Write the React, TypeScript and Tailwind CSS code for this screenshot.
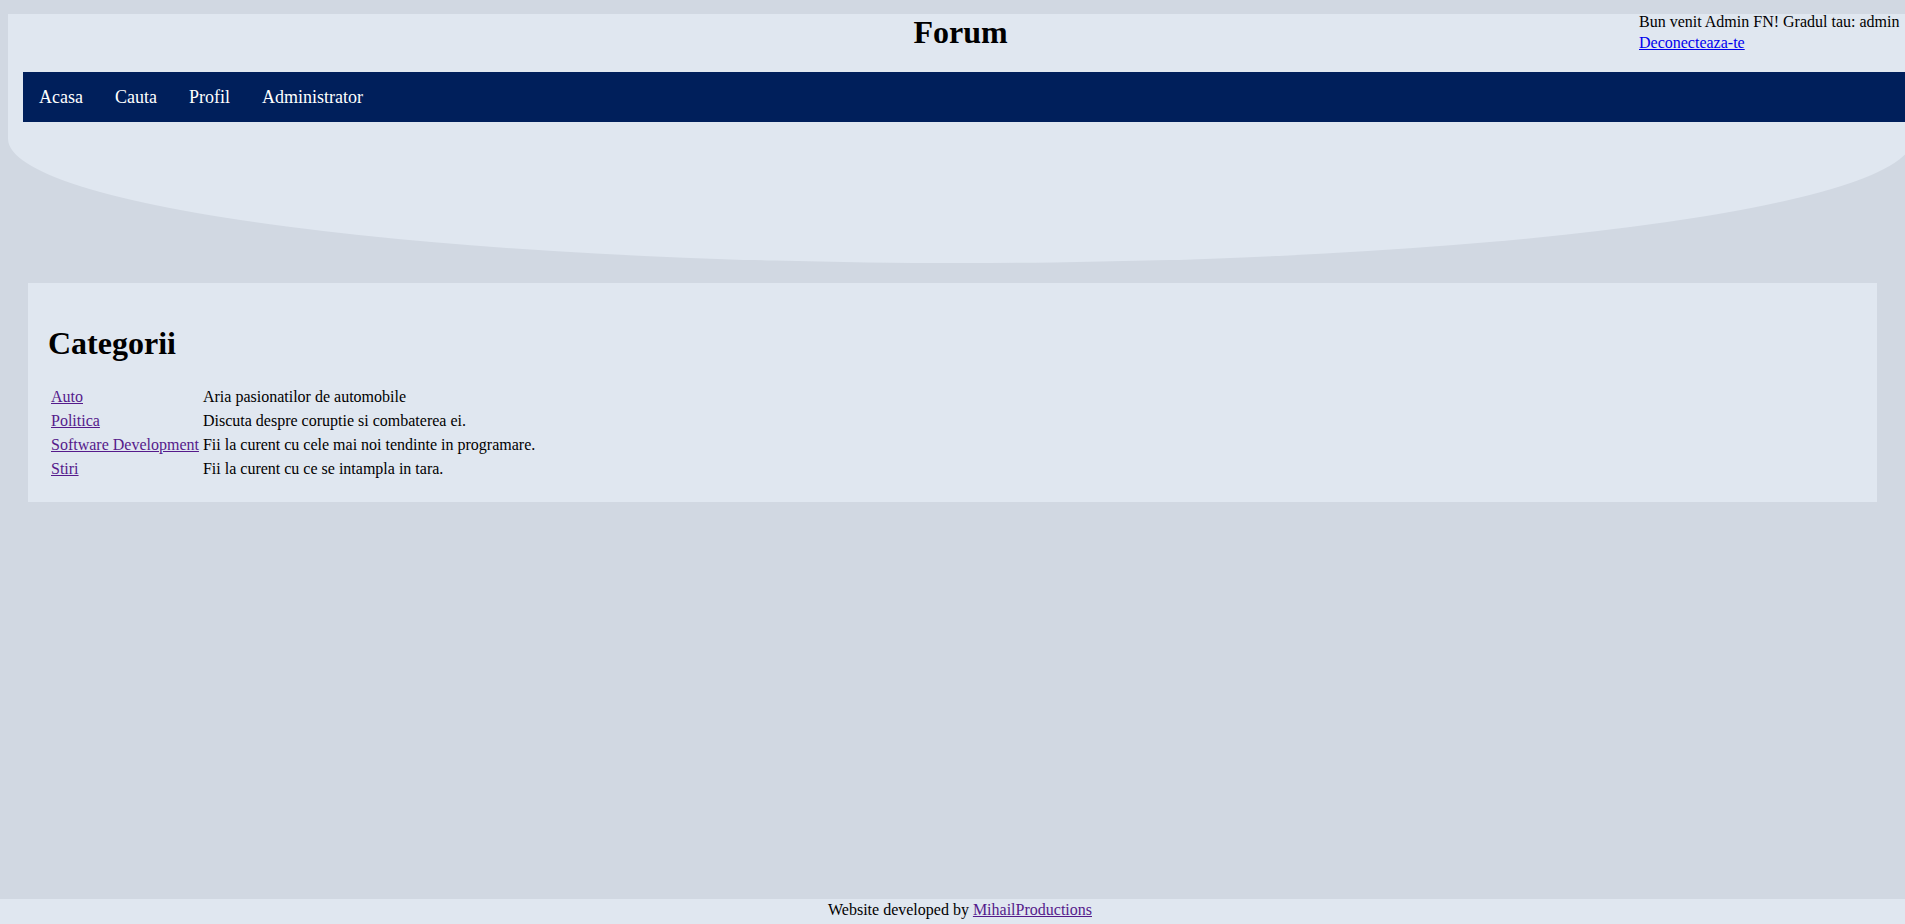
const categorii = [
  { nume: "Auto", descriere: "Aria pasionatilor de automobile" },
  { nume: "Politica", descriere: "Discuta despre coruptie si combaterea ei." },
  { nume: "Software Development", descriere: "Fii la curent cu cele mai noi tendinte in programare." },
  { nume: "Stiri", descriere: "Fii la curent cu ce se intampla in tara." },
];

const meniu = ["Acasa", "Cauta", "Profil", "Administrator"];

export default function App() {
  return (
    <div className="min-h-screen overflow-hidden bg-[#d1d8e2] pt-3 font-['Liberation_Serif','Times_New_Roman',serif] text-[16px] text-black">
      {/* header cu forma eliptica */}
      <header className="relative ml-2 h-[249px] w-[1905px] rounded-b-[50%] bg-[#e0e7f0]">
        <h1 className="mt-[2px] text-center text-[32px] font-bold leading-[37px]">Forum</h1>
        <div className="absolute left-[1631px] top-[-3px] leading-[21px]">
          <div>Bun venit Admin FN! Gradul tau: admin</div>
          <a href="#" className="text-[#0000ee] underline">
            Deconecteaza-te
          </a>
        </div>
        <nav className="ml-[15px] mt-[21px] flex h-[50px] items-center bg-[#001f5b]">
          {meniu.map((item) => (
            <a key={item} href="#" className="px-4 text-[18px] leading-[21px] text-white">
              {item}
            </a>
          ))}
        </nav>
      </header>

      <main className="mx-7 mt-[20px] bg-[#e0e7f0] p-5">
        <h2 className="my-[22px] text-[32px] font-bold leading-[37px]">Categorii</h2>
        <table className="border-separate border-spacing-[2px]">
          <tbody>
            {categorii.map((c) => (
              <tr key={c.nume}>
                <td className="px-px py-[2px] leading-[18px]">
                  <a href="#" className="text-[#551a8b] underline">
                    {c.nume}
                  </a>
                </td>
                <td className="px-px py-[2px] leading-[18px]">{c.descriere}</td>
              </tr>
            ))}
          </tbody>
        </table>
      </main>

      <footer className="fixed bottom-0 left-0 right-0 h-[25px] bg-[#e0e7f0] pl-[15px] pt-[2px] text-center leading-[18px]">
        Website developed by{" "}
        <a href="#" className="text-[#551a8b] underline">
          MihailProductions
        </a>
      </footer>
    </div>
  );
}
